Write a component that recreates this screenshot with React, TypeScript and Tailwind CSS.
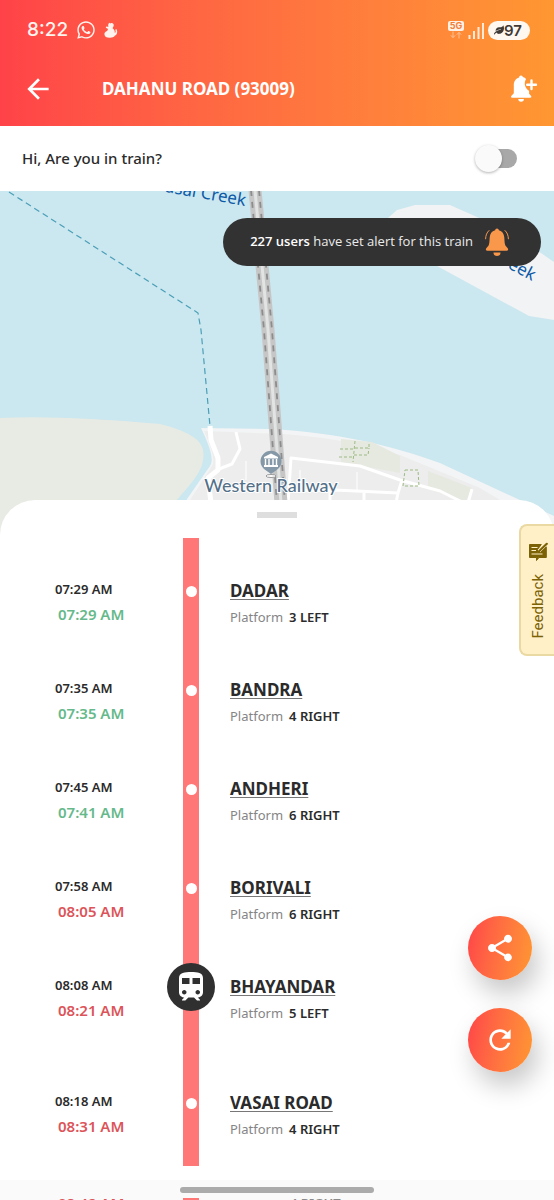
import { FaLeaf, FaWhatsapp } from "react-icons/fa";
import { MdArrowBack, MdRefresh, MdShare, MdTrain } from "react-icons/md";

interface Stop {
  name: string;
  scheduled: string;
  expected: string;
  platform: string;
  late: boolean;
  current?: boolean;
  tall?: boolean;
}

const stops: Stop[] = [
  { name: "DADAR", scheduled: "07:29 AM", expected: "07:29 AM", platform: "3 LEFT", late: false },
  { name: "BANDRA", scheduled: "07:35 AM", expected: "07:35 AM", platform: "4 RIGHT", late: false },
  { name: "ANDHERI", scheduled: "07:45 AM", expected: "07:41 AM", platform: "6 RIGHT", late: false },
  { name: "BORIVALI", scheduled: "07:58 AM", expected: "08:05 AM", platform: "6 RIGHT", late: true },
  {
    name: "BHAYANDAR",
    scheduled: "08:08 AM",
    expected: "08:21 AM",
    platform: "5 LEFT",
    late: true,
    current: true,
    tall: true,
  },
  {
    name: "VASAI ROAD",
    scheduled: "08:18 AM",
    expected: "08:31 AM",
    platform: "4 RIGHT",
    late: true,
    tall: true,
  },
];

function StatusBar() {
  return (
    <div className="flex h-[60px] items-center justify-between pr-6 pl-[27px] font-['Inter',sans-serif]">
      <div className="flex items-center text-[#fff3ee]">
        <span className="text-[19px] font-medium">8:22</span>
        <FaWhatsapp className="ml-2 size-5" />
        <svg viewBox="0 0 14 16" className="ml-2 h-4 w-[14px]" fill="currentColor">
          <path d="M5.2.8 6.4 1.4C8.2.4 10 1.6 9.7 3.6 9.5 5 8.7 5.6 8.6 6.3c1.600 1.100 2.300 2.800 2.200 4.700 1.200-.4 1-1.600.6-2.900-.2-.8 1-1.100 1.400-.3.9 2.400.4 4.800-2 6-1.200 1.600-3 2-5.300 1.900C2.600 15.700.5 14.600.4 12.200c0-1.600 1.100-2.600 2.700-3.200l1-2.100-1.900-1c-.8-.5-.2-1.700.7-1.400l1.500.5c-.4-1.400-.3-3.200.8-4.200Z" />
        </svg>
      </div>
      <div className="flex items-center">
        <div className="flex w-4 flex-col items-center">
          <span className="w-4 rounded-xs bg-[#fff1e6] text-center text-[9px] leading-[10px] font-bold text-[#f0803c]">
            5G
          </span>
          <svg viewBox="0 0 12 8" className="h-2 w-3" fill="none" stroke="#ffc195">
            <path d="M3 .5v6M.8 4.300 3 6.700l2.200-2.400M9 7.500v-6M6.800 3.700 9 1.300l2.200 2.400" />
          </svg>
        </div>
        <svg viewBox="0 0 16 17" className="ml-1 h-[17px] w-4" fill="none" stroke="#ffead9" strokeWidth="2">
          <path d="M1.500 17v-4M6 17V9M10.500 17V5M15 17V1" />
        </svg>
        <div className="ml-1 flex h-[19px] items-center rounded-full bg-[#fff8f1] pr-2 pl-[6px] text-[#3f3a36]">
          <FaLeaf className="size-[10px]" />
          <span className="text-[15px] leading-[19px] font-semibold">97</span>
        </div>
      </div>
    </div>
  );
}

function BellPlusIcon() {
  return (
    <svg viewBox="0 0 28 28" className="h-7 w-7" fill="#fff">
      <path d="M11 .5a1.900 1.900 0 0 1 1.900 1.600c1.300.4 2.400 1 3.200 1.900-2 3.200-1.700 7.400 1 10.200.6.700 1.300 1.200 2 1.500v3.100l1.800 1.900c.9 1 .4 2-.8 2H2.300c-1.300 0-1.700-1-.8-2l2.300-2.400v-8.300c0-3.600 2.100-6.500 5.300-7.500A1.900 1.900 0 0 1 11 .5Z" />
      <path d="M8.300 24h5.600a2.800 2.800 0 0 1-5.600 0Z" />
      <path d="M21.500 5.500v8.500M17.200 9.800h8.800" stroke="#fff" strokeWidth="2.400" strokeLinecap="round" />
    </svg>
  );
}

function RingingBellIcon() {
  return (
    <svg viewBox="0 0 24 28" className="h-7 w-6" fill="#f9974a">
      <path d="M12 .5a1.900 1.900 0 0 1 1.900 1.700c3.400.9 5.100 3.500 5.400 7.200.2 3.500.3 6.300 1.100 8.100l2.300 2.700c.9 1.100.4 2.600-1 2.600H2.300c-1.400 0-1.900-1.500-1-2.600l2.300-2.700c.8-1.800.9-4.600 1.100-8.100.3-3.700 2-6.300 5.400-7.200A1.900 1.900 0 0 1 12 .5Z" />
      <path d="M8.500 24.500h7a3.500 3.500 0 0 1-7 0Z" />
      <path
        d="M4 2.500C1.800 4.500.7 7.300.6 10.800M20 2.500c2.200 2 3.300 4.800 3.400 8.300"
        fill="none"
        stroke="#f9974a"
        strokeWidth="1"
        strokeLinecap="round"
      />
    </svg>
  );
}

function FeedbackIcon() {
  return (
    <svg viewBox="0 0 20 20" className="h-5 w-5" fill="none">
      <path
        d="M1.500 2.500h11.800L9.500 7.500v3h3l5.800-5.600v10.600H11L8.500 18.500v-3h-7Z"
        fill="#7c6206"
        stroke="#7c6206"
        strokeLinejoin="round"
      />
      <path d="M3.500 5.500h6M3.500 8.500h4.500M3.500 12h11" stroke="#fff0c8" strokeWidth="1.200" />
      <path d="m11 9.300 7.800-7.500" stroke="#7c6206" strokeWidth="2.200" strokeLinecap="round" />
    </svg>
  );
}

function TrainMap() {
  return (
    <svg
      viewBox="0 191 554 344"
      preserveAspectRatio="xMidYMin slice"
      className="block h-[344px] w-full bg-[#cbe7ef]"
      fill="none"
      aria-label="Live train map"
    >
      {/* land */}
      <path d="M0 418Q60 415 160 424C184 430 201 438 203 450C206 468 194 480 176 501L160 535H0Z" fill="#e8ebe4" />
      <path d="M201 428L270 429C340 433 390 445 440 463L520 500L554 516V535H176L187 499L210 466Q216 459 201 428Z" fill="#f2f4f5" />
      <path d="M204 431L284 434Q350 439 400 455L480 488L505 503V535H178L190 500L212 466Q217 459 204 431Z" fill="#ededed" />
      <path d="M388 218L397 210L415 205H450L477 217L541 253L554 262V320L529 316L437 266Z" fill="#f1f3f4" />
      <path d="M341 439L372 442L400 456V473L341 462ZM428 471L472 488L466 501L428 489Z" fill="#e6e9e0" />

      {/* roads */}
      <g stroke="#fff" strokeLinejoin="round">
        <path d="M210 426L211 440L218 458V470L208 478L211 503" strokeWidth="5" />
        <path d="M236 432L240 449L232 464L219 469" strokeWidth="3" />
        <path d="M288 503L291 458L360 466L400 480L440 491L464 503" strokeWidth="3" />
        <path d="M290 491L335 490L398 493L402 480M398 493L396 503M330 491V503M364 492V503M472 489L468 503" strokeWidth="3" />
        <path d="M300 470V490M357 472V491M246 461V480" strokeWidth="1" />
      </g>
      <g stroke="#9dba84" strokeWidth="1" strokeDasharray="3 2">
        <path d="M340 449H354M339 457H354M355 441L353 462M355 448H369V442M354 455H368L369 448" />
        <path d="M405 470H418L419 486H403Z" />
      </g>

      {/* ferry route */}
      <path d="M9 192L198 313L201 330L210 426" stroke="#4a9fb8" strokeWidth="1.200" strokeDasharray="6 4" />

      {/* railway bridge */}
      <g strokeLinejoin="round">
        <path d="M255 190L268 330L281 503" stroke="#e2e4e4" strokeWidth="11" />
        <path d="M251 190L264 330L277 503M259 190L272 330L285 503" stroke="#c6c6c6" strokeWidth="5" />
        <path d="M251 190L264 330L277 503M259 190L272 330L285 503" stroke="#8c8c8c" strokeWidth="1.800" strokeDasharray="6 6" />
      </g>

      <g fill="#0d5aa7" fontFamily="'Noto Sans', sans-serif" fontSize="17">
        <text x="245" y="206" textAnchor="end" transform="rotate(10 245 206)">
          Vasai Creek
        </text>
        <text x="532" y="281" textAnchor="end" transform="rotate(28 532 281)">
          Vasai Creek
        </text>
      </g>

      {/* station pin */}
      <ellipse cx="271" cy="476" rx="5" ry="1.500" stroke="#999" fill="#fff" />
      <path d="M271 474L264 469A10.500 10.500 0 1 1 278 469Z" fill="#8598a8" />
      <path d="M264 457L271 453.500L278 457V458.500H264ZM264 465H278V467H264Z" fill="#fff" />
      <path d="M265.500 459V465M269 459V465M273 459V465M276.500 459V465" stroke="#fff" strokeWidth="1.400" />
      <text
        x="271"
        y="492"
        textAnchor="middle"
        fill="#547089"
        stroke="#fff"
        strokeWidth="2"
        paintOrder="stroke"
        fontFamily="Lato, sans-serif"
        fontSize="18"
        fontWeight="500"
      >
        Western Railway
      </text>
    </svg>
  );
}

function StopRow({ stop }: { stop: Stop }) {
  return (
    <li className={`grid grid-cols-[183px_16px_1fr] ${stop.tall ? "h-[116px]" : "h-[99px]"}`}>
      <div className="pt-[41px] pl-[55px]">
        <p className="text-[13px] leading-5 font-semibold text-[#2b2b2b]">{stop.scheduled}</p>
        <p
          className={`mt-[5px] pl-[3px] text-[15px] leading-5 font-semibold ${
            stop.late ? "text-[#dc5459]" : "text-[#65b98a]"
          }`}
        >
          {stop.expected}
        </p>
      </div>
      <div className="flex justify-center bg-[#ff7777]">
        {stop.current ? (
          <span className="z-10 mt-[29px] flex size-12 shrink-0 items-center justify-center rounded-full bg-[#303030]">
            <MdTrain className="size-9 text-white" />
          </span>
        ) : (
          <span className="mt-12 size-[11px] rounded-full bg-white" />
        )}
      </div>
      <div className="pt-[42px] pl-[31px]">
        <a
          href="#"
          className="block w-fit text-[17px] leading-[22px] font-bold text-[#2b2b2b] underline decoration-[#777] decoration-1 underline-offset-2"
        >
          {stop.name}
        </a>
        <p className="mt-[5px] flex gap-[6px] text-[13px] leading-5">
          <span className="text-[#858585]">Platform</span>
          <span className="font-semibold text-[#2b2b2b]">{stop.platform}</span>
        </p>
      </div>
    </li>
  );
}

export default function App() {
  return (
    <div className="relative flex h-screen flex-col overflow-hidden bg-white font-['Noto_Sans',sans-serif]">
      <header className="bg-linear-to-r from-[#ff4248] to-[#ff9731] pb-2">
        <StatusBar />
        <div className="flex h-[58px] items-center pr-4 pl-[22px] text-white">
          <button type="button" aria-label="Back">
            <MdArrowBack className="size-8" />
          </button>
          <h1 className="ml-12 flex-1 text-[17px] font-bold">DAHANU ROAD (93009)</h1>
          <button type="button" aria-label="Add alert">
            <BellPlusIcon />
          </button>
        </div>
      </header>

      <div className="flex h-[65px] shrink-0 items-center justify-between pr-[37px] pl-[22px]">
        <label htmlFor="in-train" className="text-[15px] font-medium text-[#2b2b2b]">
          Hi, Are you in train?
        </label>
        <input
          id="in-train"
          type="checkbox"
          role="switch"
          className="relative h-[19px] w-[38px] appearance-none rounded-full bg-[#a8a8a8] before:absolute before:-top-1 before:-left-1 before:size-[27px] before:rounded-full before:bg-[#fafafa] before:shadow-[0_1px_3px_rgba(0,0,0,0.3)] checked:before:left-4"
        />
      </div>

      <section className="relative shrink-0">
        <TrainMap />
        <div className="absolute top-[27px] right-[13px] flex h-12 items-center gap-3 rounded-full bg-[#323232] pr-8 pl-[27px] font-['Open_Sans',sans-serif] text-[13px] text-[#ececec]">
          <p>
            <strong className="font-semibold text-white">227 users</strong> have set alert for this train
          </p>
          <RingingBellIcon />
        </div>
      </section>

      <main className="relative -mt-[35px] flex-1 rounded-t-[35px] bg-white pt-3">
        <div className="mx-auto h-[6px] w-10 bg-[#dedede]" />
        <ul className="mt-5">
          {stops.map((stop) => (
            <StopRow key={stop.name} stop={stop} />
          ))}
        </ul>

        <button
          type="button"
          className="absolute top-6 right-0 flex h-[132px] w-[35px] flex-col items-center gap-3 rounded-l-lg border-2 border-r-0 border-[#ead9a2] bg-[#fff0c8] pt-4 text-[#7c6206]"
        >
          <FeedbackIcon />
          <span className="rotate-180 font-['Roboto',sans-serif] text-[15px] leading-5 [writing-mode:vertical-rl]">
            Feedback
          </span>
        </button>
      </main>

      <div className="absolute right-[22px] bottom-32 flex flex-col gap-7 text-white">
        <button
          type="button"
          aria-label="Share"
          className="flex size-16 items-center justify-center rounded-full bg-linear-100 from-[#ff4248] to-[#ff9731] shadow-[6px_14px_26px_rgba(0,0,0,0.22)]"
        >
          <MdShare className="size-8" />
        </button>
        <button
          type="button"
          aria-label="Refresh"
          className="flex size-16 items-center justify-center rounded-full bg-linear-100 from-[#ff4248] to-[#ff9731] shadow-[6px_14px_26px_rgba(0,0,0,0.22)]"
        >
          <MdRefresh className="size-8" />
        </button>
      </div>

      {/* gesture bar, with the next stop peeking out below it */}
      <footer className="absolute inset-x-0 bottom-0 h-5 bg-[#fafafa] pt-[7px]">
        <div className="mx-auto h-[6px] w-[194px] rounded-full bg-[#ababab]" />
        <div className="mt-[5px] grid h-[2px] grid-cols-[183px_16px_1fr] font-semibold">
          <span className="pl-[58px] text-[15px] leading-[11px] text-[#dc5459]">08:42 AM</span>
          <span className="bg-[#ff7777]" />
          <span className="pl-[91px] text-[13px] leading-[10px] text-[#8a8a8a]">4 RIGHT</span>
        </div>
      </footer>
    </div>
  );
}
